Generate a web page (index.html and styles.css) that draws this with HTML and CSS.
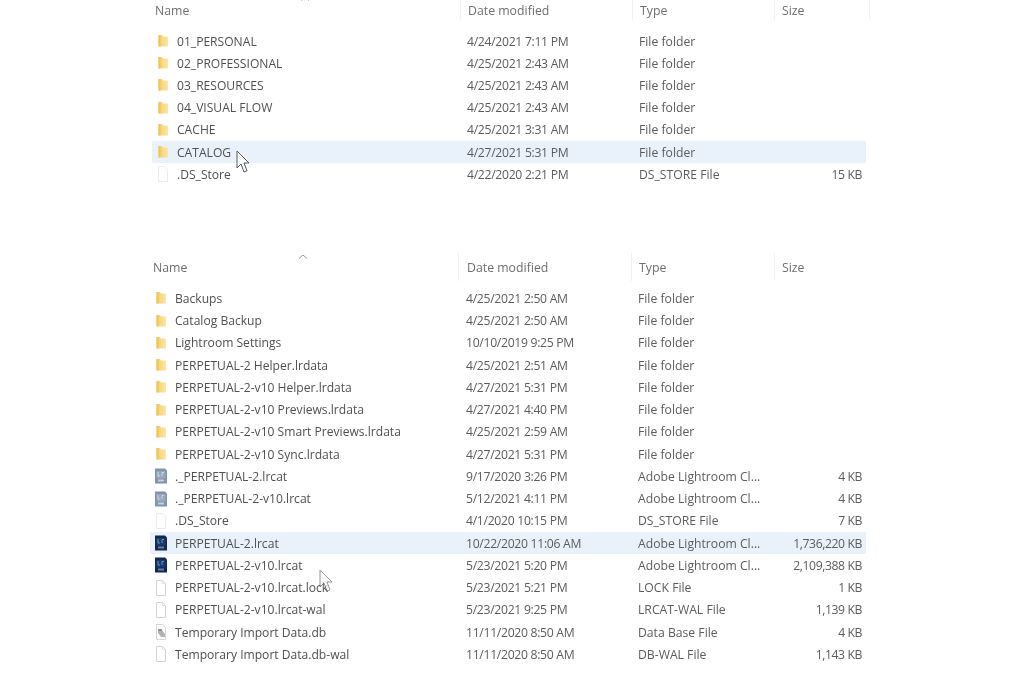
FILE: index.html
```html
<!DOCTYPE html>
<html lang="en">
<head>
  <meta charset="UTF-8" />
  <title>File Explorer</title>
  <link rel="stylesheet" href="styles.css">
</head>
<body>
  <svg class="defs" width="0" height="0">
    <defs>
      <linearGradient id="folderFill" x1="0" y1="0" x2="1" y2="0">
        <stop offset="0" stop-color="#f5cf68"/>
        <stop offset="1" stop-color="#fbe5a8"/>
      </linearGradient>
      <symbol id="folder" viewBox="0 0 12 14">
        <path d="M1.500 1h3.500l1 1.500h4.500l.5.5v9.500H1.500z" fill="url(#folderFill)"/>
        <path d="M1.500 1h2v11.500h-2z" fill="#efc458"/>
      </symbol>
      <symbol id="file" viewBox="0 0 12 16">
        <path d="M1.500 .5h6l3 3v12h-9z" fill="#fff" stroke="#d4d4d4"/>
        <path d="M7.500 .5v3h3" fill="none" stroke="#e2e2e2"/>
      </symbol>
      <symbol id="ghost" viewBox="0 0 12 16">
        <path d="M1.500 .5h6l3 3v12h-9z" fill="#fff" stroke="#ebebeb"/>
      </symbol>
      <symbol id="db" viewBox="0 0 12 16">
        <path d="M1.500 .5h6l3 3v12h-9z" fill="#fff" stroke="#d6d6d6"/>
        <path d="M3 5l4 1 3 4v3H6L3 9z" fill="#b4b4b4"/>
        <path d="M3 5h4v2H3z" fill="#8e8e8e"/>
      </symbol>
      <symbol id="lrcat" viewBox="0 0 12 16">
        <path d="M0 .5h10l2 2v13H0z" fill="#14274e"/>
        <path d="M1.500 3h9v7.500h-9z" fill="#1c3a6e"/>
        <path d="M3 4v4h2M7 8V4.500h2" fill="none" stroke="#7fa6d8" stroke-width=".8"/>
        <path d="M3 11.500h6v2H3z" fill="#5f82b5"/>
      </symbol>
      <symbol id="lrcat-dim" viewBox="0 0 12 16">
        <path d="M0 .5h10l2 2v13H0z" fill="#7f94ad"/>
        <path d="M1.500 3h9v7.500h-9z" fill="#98a9bd"/>
        <path d="M3 4v4h2M7 8V4.500h2" fill="none" stroke="#d5dfeb" stroke-width=".8"/>
        <path d="M3 11.500h6v2H3z" fill="#c5d0dd"/>
      </symbol>
      <symbol id="pointer" viewBox="0 0 13 24">
        <path d="M1 1v17l4-4 3 8 3-1.200-3-7.800h5z" fill="#fff" stroke="#5a5a5a" stroke-width="1"/>
      </symbol>
    </defs>
  </svg>

  <!-- Top folder -->
  <div class="pane pane-top">
    <div class="sort-arrow">
      <svg width="10" height="5" viewBox="0 0 10 5"><path d="M1 4.500 5 1l4 3.500" fill="none" stroke="#9a9a9a"/></svg>
    </div>
    <div class="header">
      <span>Name</span><span class="col-head">Date modified</span><span class="col-head">Type</span><span class="col-head col-last">Size</span>
    </div>
    <div class="row"><span class="name"><svg class="icon"><use href="#folder"/></svg>01_PERSONAL</span><span class="date">4/24/2021 7:11 PM</span><span>File folder</span><span class="size"></span></div>
    <div class="row"><span class="name"><svg class="icon"><use href="#folder"/></svg>02_PROFESSIONAL</span><span class="date">4/25/2021 2:43 AM</span><span>File folder</span><span class="size"></span></div>
    <div class="row"><span class="name"><svg class="icon"><use href="#folder"/></svg>03_RESOURCES</span><span class="date">4/25/2021 2:43 AM</span><span>File folder</span><span class="size"></span></div>
    <div class="row"><span class="name"><svg class="icon"><use href="#folder"/></svg>04_VISUAL FLOW</span><span class="date">4/25/2021 2:43 AM</span><span>File folder</span><span class="size"></span></div>
    <div class="row"><span class="name"><svg class="icon"><use href="#folder"/></svg>CACHE</span><span class="date">4/25/2021 3:31 AM</span><span>File folder</span><span class="size"></span></div>
    <div class="row selected"><span class="name"><svg class="icon"><use href="#folder"/></svg>CATALOG</span><span class="date">4/27/2021 5:31 PM</span><span>File folder</span><span class="size"></span></div>
    <div class="row"><span class="name"><svg class="icon"><use href="#ghost"/></svg>.DS_Store</span><span class="date">4/22/2020 2:21 PM</span><span>DS_STORE File</span><span class="size">15 KB</span></div>
    <svg class="cursor cursor-top"><use href="#pointer"/></svg>
  </div>

  <!-- Bottom folder -->
  <div class="pane pane-bottom">
    <div class="sort-arrow">
      <svg width="10" height="5" viewBox="0 0 10 5"><path d="M1 4.500 5 1l4 3.500" fill="none" stroke="#9a9a9a"/></svg>
    </div>
    <div class="header">
      <span>Name</span><span class="col-head col-date">Date modified</span><span class="col-head">Type</span><span class="col-head">Size</span>
    </div>
    <div class="row"><span class="name"><svg class="icon"><use href="#folder"/></svg>Backups</span><span class="date">4/25/2021 2:50 AM</span><span>File folder</span><span class="size"></span></div>
    <div class="row"><span class="name"><svg class="icon"><use href="#folder"/></svg>Catalog Backup</span><span class="date">4/25/2021 2:50 AM</span><span>File folder</span><span class="size"></span></div>
    <div class="row"><span class="name"><svg class="icon"><use href="#folder"/></svg>Lightroom Settings</span><span class="date">10/10/2019 9:25 PM</span><span>File folder</span><span class="size"></span></div>
    <div class="row"><span class="name"><svg class="icon"><use href="#folder"/></svg>PERPETUAL-2 Helper.lrdata</span><span class="date">4/25/2021 2:51 AM</span><span>File folder</span><span class="size"></span></div>
    <div class="row"><span class="name"><svg class="icon"><use href="#folder"/></svg>PERPETUAL-2-v10 Helper.lrdata</span><span class="date">4/27/2021 5:31 PM</span><span>File folder</span><span class="size"></span></div>
    <div class="row"><span class="name"><svg class="icon"><use href="#folder"/></svg>PERPETUAL-2-v10 Previews.lrdata</span><span class="date">4/27/2021 4:40 PM</span><span>File folder</span><span class="size"></span></div>
    <div class="row"><span class="name"><svg class="icon"><use href="#folder"/></svg>PERPETUAL-2-v10 Smart Previews.lrdata</span><span class="date">4/25/2021 2:59 AM</span><span>File folder</span><span class="size"></span></div>
    <div class="row"><span class="name"><svg class="icon"><use href="#folder"/></svg>PERPETUAL-2-v10 Sync.lrdata</span><span class="date">4/27/2021 5:31 PM</span><span>File folder</span><span class="size"></span></div>
    <div class="row"><span class="name"><svg class="icon"><use href="#lrcat-dim"/></svg>._PERPETUAL-2.lrcat</span><span class="date">9/17/2020 3:26 PM</span><span>Adobe Lightroom Cl...</span><span class="size">4 KB</span></div>
    <div class="row"><span class="name"><svg class="icon"><use href="#lrcat-dim"/></svg>._PERPETUAL-2-v10.lrcat</span><span class="date">5/12/2021 4:11 PM</span><span>Adobe Lightroom Cl...</span><span class="size">4 KB</span></div>
    <div class="row"><span class="name"><svg class="icon"><use href="#ghost"/></svg>.DS_Store</span><span class="date">4/1/2020 10:15 PM</span><span>DS_STORE File</span><span class="size">7 KB</span></div>
    <div class="row selected"><span class="name"><svg class="icon"><use href="#lrcat"/></svg>PERPETUAL-2.lrcat</span><span class="date">10/22/2020 11:06 AM</span><span>Adobe Lightroom Cl...</span><span class="size">1,736,220 KB</span></div>
    <div class="row"><span class="name"><svg class="icon"><use href="#lrcat"/></svg>PERPETUAL-2-v10.lrcat</span><span class="date">5/23/2021 5:20 PM</span><span>Adobe Lightroom Cl...</span><span class="size">2,109,388 KB</span></div>
    <div class="row"><span class="name"><svg class="icon"><use href="#file"/></svg>PERPETUAL-2-v10.lrcat.lock</span><span class="date">5/23/2021 5:21 PM</span><span>LOCK File</span><span class="size">1 KB</span></div>
    <div class="row"><span class="name"><svg class="icon"><use href="#file"/></svg>PERPETUAL-2-v10.lrcat-wal</span><span class="date">5/23/2021 9:25 PM</span><span>LRCAT-WAL File</span><span class="size">1,139 KB</span></div>
    <div class="row"><span class="name"><svg class="icon"><use href="#db"/></svg>Temporary Import Data.db</span><span class="date">11/11/2020 8:50 AM</span><span>Data Base File</span><span class="size">4 KB</span></div>
    <div class="row"><span class="name"><svg class="icon"><use href="#file"/></svg>Temporary Import Data.db-wal</span><span class="date">11/11/2020 8:50 AM</span><span>DB-WAL File</span><span class="size">1,143 KB</span></div>
    <svg class="cursor cursor-bottom"><use href="#pointer"/></svg>
  </div>
</body>
</html>
```

FILE: styles.css
```css
/*
  BASIC RESETS AND LAYOUT
*/
* {
  margin: 0;
  padding: 0;
  box-sizing: border-box;
}

html,
body {
  height: 100%;
  overflow: hidden;
}

body {
  background-color: #fff;
  color: #5c5c5c;
  font-family: "Open Sans", "Noto Sans", sans-serif;
  font-size: 12.2px;
}

.defs {
  display: block;
  height: 0;
}

/*
  PANES
*/
.pane {
  position: relative;
  filter: blur(0.45px);
}

.pane-top {
  width: 718px;
  margin-left: 152px;
}

.pane-bottom {
  width: 718px;
  margin-left: 150px;
  margin-top: 68px;
}

.row {
  display: grid;
  grid-template-columns: 315px 172px 142px 85px;
  align-items: center;
  height: 22.2px;
  width: 714px;
  white-space: nowrap;
}

.pane-bottom .row {
  grid-template-columns: 316px 172px 143px 85px;
  width: 716px;
  height: 22.25px;
}

.header {
  display: grid;
  grid-template-columns: 312px 172px 142px 1fr;
  align-items: center;
  height: 20px;
  margin-bottom: 10px;
  padding-left: 3px;
  color: #6e6e6e;
  font-size: 12.3px;
}

.pane-bottom .header {
  grid-template-columns: 313px 172px 143px 1fr;
  height: 28px;
  margin-bottom: 6px;
}

.col-head {
  align-self: stretch;
  display: flex;
  align-items: center;
  margin-left: -7px;
  padding-left: 7px;
  border-left: 1px solid #f0f0f0;
}

.col-date {
  margin-left: -8px;
  padding-left: 8px;
}

.col-last {
  border-right: 1px solid #f0f0f0;
}

/*
  ROWS
*/
.selected {
  background-color: #e9f2fb;
}

.name {
  display: flex;
  align-items: center;
  gap: 8px;
  padding-left: 5px;
  font-size: 12.1px;
  color: #505050;
}

.date {
  letter-spacing: -0.3px;
}

.icon {
  width: 12px;
  height: 16px;
  flex: none;
}

.size {
  text-align: right;
  padding-right: 4px;
  letter-spacing: -0.4px;
}

/*
  THINGS LYING OVER THE LIST
*/
.sort-arrow {
  position: absolute;
  top: 1px;
  left: 148px;
  line-height: 0;
}

.pane-top .sort-arrow {
  top: -4px;
  left: 148px;
}

.cursor {
  position: absolute;
  width: 13px;
  height: 24px;
}

.cursor-top {
  left: 84px;
  top: 150px;
}

.cursor-bottom {
  left: 169px;
  top: 316px;
  opacity: 0.65;
}
```
